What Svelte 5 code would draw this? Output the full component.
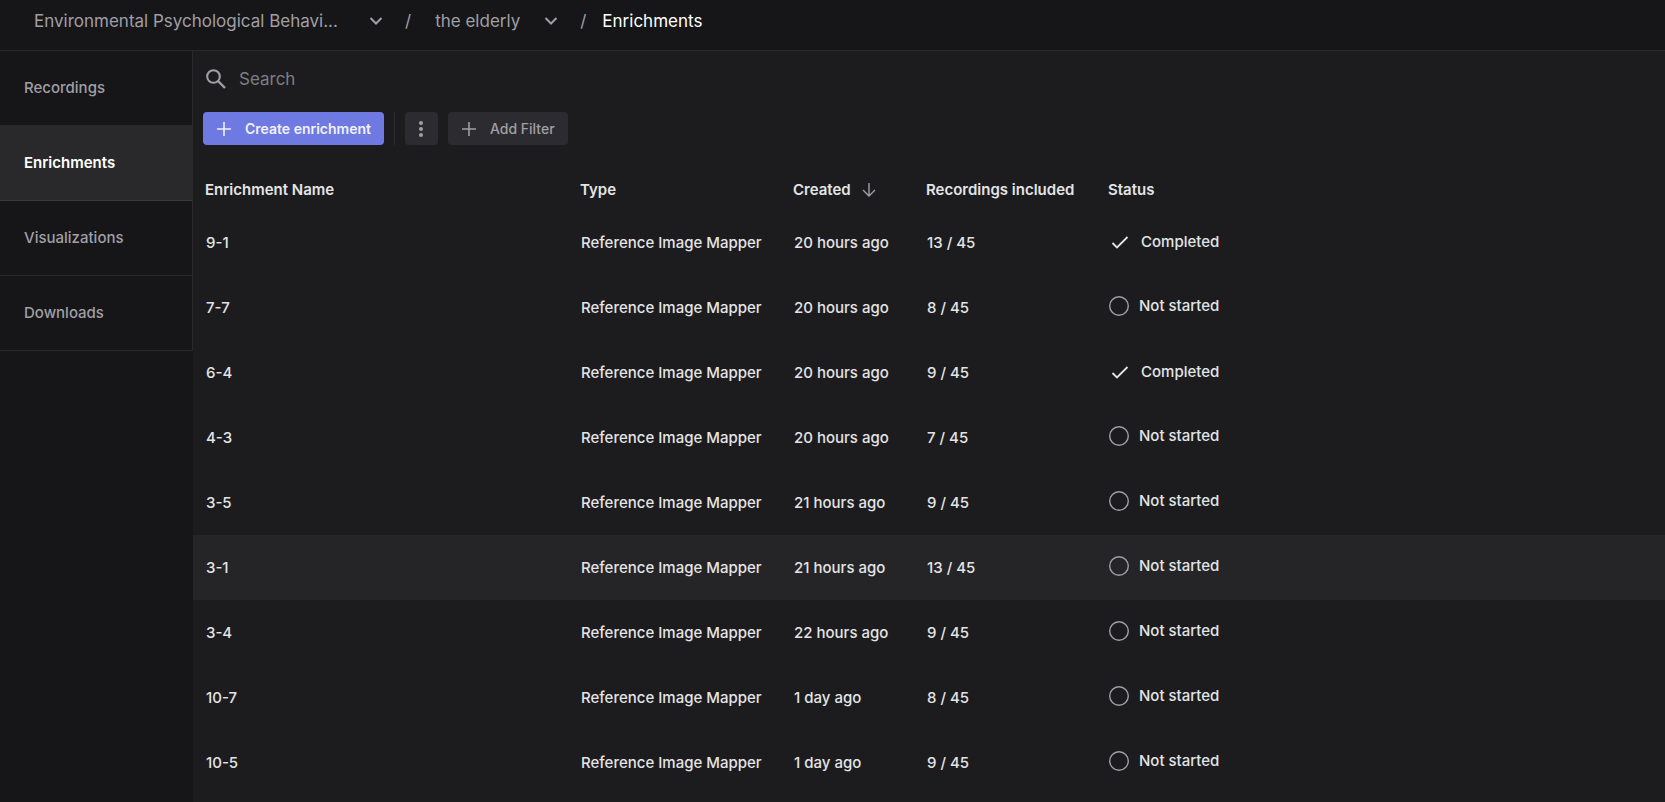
<script>
	const navItems = ['Recordings', 'Enrichments', 'Visualizations', 'Downloads'];

	let activeNav = $state('Enrichments');
	let search = $state('');

	const enrichments = [
		{ name: '9-1', created: '20 hours ago', included: '13 / 45', done: true },
		{ name: '7-7', created: '20 hours ago', included: '8 / 45', done: false },
		{ name: '6-4', created: '20 hours ago', included: '9 / 45', done: true },
		{ name: '4-3', created: '20 hours ago', included: '7 / 45', done: false },
		{ name: '3-5', created: '21 hours ago', included: '9 / 45', done: false },
		{ name: '3-1', created: '21 hours ago', included: '13 / 45', done: false },
		{ name: '3-4', created: '22 hours ago', included: '9 / 45', done: false },
		{ name: '10-7', created: '1 day ago', included: '8 / 45', done: false },
		{ name: '10-5', created: '1 day ago', included: '9 / 45', done: false }
	];

	let highlighted = $state('3-1');

	let rows = $derived(
		enrichments.filter((e) => e.name.toLowerCase().includes(search.toLowerCase()))
	);
</script>

{#snippet chevron()}
	<svg width="14" height="10" viewBox="0 0 14 10" aria-hidden="true">
		<path d="M1.5 2l5.5 5.5L12.5 2" fill="none" stroke="currentColor" stroke-width="2" />
	</svg>
{/snippet}

{#snippet plus()}
	<svg width="14" height="14" viewBox="0 0 14 14" aria-hidden="true">
		<path d="M7 0v14M0 7h14" fill="none" stroke="currentColor" stroke-width="1.6" />
	</svg>
{/snippet}

<div class="app">
	<nav class="breadcrumb" aria-label="Breadcrumb">
		<button class="crumb workspace">Environmental Psychological Behavi...{@render chevron()}</button>
		<span class="slash">/</span>
		<button class="crumb project">the elderly{@render chevron()}</button>
		<span class="slash">/</span>
		<span class="current">Enrichments</span>
	</nav>

	<div class="body">
		<aside class="sidebar">
			{#each navItems as item}
				<a
					href="#{item.toLowerCase()}"
					class:active={activeNav === item}
					onclick={() => (activeNav = item)}>{item}</a
				>
			{/each}
		</aside>

		<main>
			<label class="search">
				<svg width="20" height="20" viewBox="0 0 20 20" aria-hidden="true">
					<circle cx="7.5" cy="7.5" r="6.3" fill="none" stroke="currentColor" stroke-width="2.1" />
					<path d="M12 12l7 7" fill="none" stroke="currentColor" stroke-width="2.4" />
				</svg>
				<input type="text" placeholder="Search" aria-label="Search" bind:value={search} />
			</label>

			<div class="toolbar">
				<button class="btn primary">{@render plus()}Create enrichment</button>
				<span class="divider"></span>
				<button class="btn kebab" aria-label="More actions">
					<svg width="4" height="16" viewBox="0 0 4 16" fill="currentColor" aria-hidden="true">
						<circle cx="2" cy="2" r="2" />
						<circle cx="2" cy="8" r="2" />
						<circle cx="2" cy="14" r="2" />
					</svg>
				</button>
				<button class="btn">{@render plus()}Add Filter</button>
			</div>

			<table>
				<thead>
					<tr>
						<th class="col-name">Enrichment Name</th>
						<th class="col-type">Type</th>
						<th class="col-created">
							Created
							<svg class="sort" width="14" height="14" viewBox="0 0 14 14" aria-hidden="true">
								<path
									d="M7 0v13M1 7l6 6 6-6"
									fill="none"
									stroke="currentColor"
									stroke-width="1.4"
								/>
							</svg>
						</th>
						<th class="col-included">Recordings included</th>
						<th>Status</th>
					</tr>
				</thead>
				<tbody>
					{#each rows as row (row.name)}
						<tr
							class:highlighted={highlighted === row.name}
							onmouseenter={() => (highlighted = row.name)}
						>
							<td>{row.name}</td>
							<td>Reference Image Mapper</td>
							<td>{row.created}</td>
							<td>{row.included}</td>
							<td>
								{#if row.done}
									<span class="status done">
										<svg width="24" height="22" viewBox="0 0 24 22" aria-hidden="true">
											<path
												d="M4.5 12l4.5 4.5L19.5 6"
												fill="none"
												stroke="currentColor"
												stroke-width="1.8"
											/>
										</svg>
										Completed
									</span>
								{:else}
									<span class="status">
										<svg width="22" height="22" viewBox="0 0 22 22" aria-hidden="true">
											<circle
												cx="11"
												cy="11"
												r="9.3"
												fill="none"
												stroke="#a09fa6"
												stroke-width="1.4"
											/>
										</svg>
										Not started
									</span>
								{/if}
							</td>
						</tr>
					{/each}
				</tbody>
			</table>
		</main>
	</div>
</div>

<style>
	:global(body) {
		background: #1c1c1e;
	}

	.app {
		display: flex;
		flex-direction: column;
		height: 100vh;
		overflow: hidden;
		font-family: Inter, 'Liberation Sans', sans-serif;
		font-size: 15px;
		font-weight: 500;
		color: #e4e4e6;
	}

	button {
		font: inherit;
		color: inherit;
		background: none;
		border: none;
		padding: 0;
		cursor: pointer;
	}

	.breadcrumb {
		display: flex;
		align-items: center;
		flex: none;
		height: 42px;
		padding: 0 34px 8px;
		background: #161618;
		border-bottom: 1px solid #29292c;
		font-size: 17px;
		font-weight: 400;
		color: #a09fa6;
	}

	.crumb {
		display: flex;
		align-items: center;
		justify-content: space-between;
		gap: 24px;
	}

	.workspace {
		min-width: 349px;
	}

	.slash {
		padding: 0 24px 0 22px;
	}

	.project + .slash {
		padding-right: 16px;
	}

	.current {
		color: #fff;
	}

	.body {
		display: flex;
		flex: 1;
		min-height: 0;
	}

	.sidebar {
		flex: none;
		width: 193px;
		background: #161618;
	}

	.sidebar a {
		display: flex;
		align-items: center;
		box-sizing: border-box;
		height: 75px;
		padding: 0 24px 2px;
		border-right: 1px solid #29292c;
		border-bottom: 1px solid #29292c;
		color: #a09fa6;
		text-decoration: none;
	}

	.sidebar a.active {
		background: #29292b;
		border-bottom-color: #38383b;
		color: #fff;
		font-weight: 600;
	}

	main {
		flex: 1;
		min-width: 0;
		background: #1c1c1e;
	}

	.search {
		display: flex;
		align-items: center;
		gap: 13px;
		height: 55px;
		padding: 0 13px;
		color: #a09fa6;
	}

	.search input {
		flex: 1;
		padding: 0;
		border: none;
		outline: none;
		background: none;
		font: inherit;
		font-size: 17px;
		font-weight: 400;
		color: #e4e4e6;
	}

	.search input::placeholder {
		color: #7e7d86;
		opacity: 1;
	}

	.toolbar {
		display: flex;
		gap: 10px;
		padding: 6px 10px 24px;
	}

	.btn {
		display: flex;
		align-items: center;
		gap: 14px;
		height: 33px;
		padding: 0 13px 0 14px;
		border-radius: 4px;
		background: #2c2c30;
		font-size: 14px;
		color: #a09fa6;
	}

	.btn.primary {
		background: #6e7ae2;
		color: #f1f1fb;
		font-weight: 600;
	}

	.btn.kebab {
		justify-content: center;
		width: 33px;
		padding: 0;
	}

	.divider {
		width: 1px;
		background: #2c2c30;
	}

	table {
		width: 100%;
		border-collapse: collapse;
		table-layout: fixed;
	}

	th,
	td {
		box-sizing: border-box;
		padding: 0 0 0 13px;
		text-align: left;
		white-space: nowrap;
	}

	th {
		height: 41px;
		padding-left: 12px;
		font-weight: 600;
	}

	td {
		height: 65px;
	}

	.col-name {
		width: 375px;
	}

	.col-type {
		width: 213px;
	}

	.col-created {
		width: 133px;
	}

	.col-included {
		width: 182px;
	}

	.sort {
		margin-left: 8px;
		vertical-align: -2px;
		color: #a09fa6;
	}

	tr.highlighted {
		background: #252527;
	}

	.status {
		display: flex;
		align-items: center;
		gap: 9px;
		margin-left: -1px;
		padding-bottom: 4px;
	}

	.status.done {
		padding-bottom: 2px;
	}
</style>
